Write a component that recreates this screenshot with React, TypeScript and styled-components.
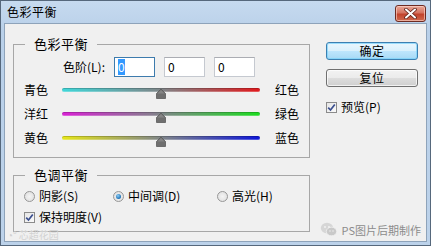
import React from "react";
import styled, { createGlobalStyle } from "styled-components";

const Global = createGlobalStyle`
  html, body { margin: 0; padding: 0; background: #ffffff; }
  body { font-family: "Noto Sans CJK SC", "Liberation Sans", sans-serif; font-size: 12px; color: #000; }
  * { box-sizing: border-box; }
`;

const Window = styled.div`
  width: 431px;
  height: 246px;
  border: 1px solid #56687c;
  background: linear-gradient(#c6daef, #b9d0e9 30px, #bcd2ea);
  display: flex;
  flex-direction: column;
`;

const TitleBar = styled.div`
  height: 22px;
  display: flex;
  align-items: center;
  justify-content: space-between;
  padding: 0 4px 0 6px;
`;

const Title = styled.span`
  font-size: 12px;
  line-height: 14px;
  color: #000;
  letter-spacing: 0.5px;
`;

const CloseBtn = styled.div`
  width: 31px;
  height: 17px;
  margin-top: 2px;
  border: 1px solid #6e2b22;
  border-radius: 3px;
  background: linear-gradient(#e9a797, #d57461 45%, #c2432c 55%, #cf6a4f);
  box-shadow: inset 0 0 0 1px rgba(255, 220, 210, 0.6);
  display: flex;
  align-items: center;
  justify-content: center;
`;

const Client = styled.div`
  flex: 1;
  margin: 0 3px 3px 3px;
  border: 1px solid #8ea3ba;
  background: #f0f0f0;
  display: flex;
  position: relative;
`;

const LeftCol = styled.div`
  width: 297px;
  margin-left: 8px;
  display: flex;
  flex-direction: column;
`;

const Group = styled.fieldset<{ $top: number; $padBottom: number }>`
  margin: ${(p) => p.$top}px 0 0 0;
  padding: 0 0 ${(p) => p.$padBottom}px 0;
  min-width: 0;
  border: 1px solid #a7a7a7;
  display: flex;
  flex-direction: column;
`;

const Legend = styled.legend`
  margin-left: 11px;
  padding: 0 9px;
  font-size: 13px;
  line-height: 16px;
  letter-spacing: 0.5px;
`;

const LevelRow = styled.div`
  display: flex;
  align-items: center;
  height: 20px;
  margin-top: 5px;
  padding-left: 49px;
  gap: 9px;
`;

const LevelLabel = styled.span`
  margin-right: 0px;
  line-height: 14px;
`;

const NumBox = styled.div<{ $focus?: boolean }>`
  width: 41px;
  height: 20px;
  border: 1px solid ${(p) => (p.$focus ? "#3d7bad" : "#c5c9d0")};
  border-top-color: ${(p) => (p.$focus ? "#3d7bad" : "#abadb3")};
  background: #fff;
  display: flex;
  align-items: center;
  padding-left: 3px;
  line-height: 14px;
`;

const Sel = styled.span`
  background: #3399ff;
  color: #fff;
  padding: 1px 0;
`;

const SliderRow = styled.div`
  display: flex;
  align-items: center;
  height: 24px;
  padding-left: 10px;
`;

const SideLabel = styled.span<{ $w: number }>`
  width: ${(p) => p.$w}px;
  line-height: 14px;
`;

const TrackWrap = styled.div`
  position: relative;
  width: 198px;
  height: 4px;
  margin-right: 15px;
`;

const Track = styled.div<{ $from: string; $to: string }>`
  width: 100%;
  height: 4px;
  border-radius: 2px;
  background: linear-gradient(to right, ${(p) => p.$from}, #7f8588 50%, ${(p) => p.$to});
  box-shadow: inset 0 1px 0 rgba(0, 0, 0, 0.18), inset 0 -1px 0 rgba(255, 255, 255, 0.25);
`;

const Thumb = styled.svg`
  position: absolute;
  left: 94px;
  top: 1px;
`;

const OptRow = styled.div`
  display: flex;
  align-items: center;
  height: 16px;
  margin-top: 5px;
  padding-left: 10px;
`;

const OptItem = styled.label<{ $w?: number }>`
  display: flex;
  align-items: center;
  gap: 4px;
  ${(p) => (p.$w ? `width: ${p.$w}px;` : "")}
  line-height: 14px;
`;

const Radio = styled.span<{ $on?: boolean }>`
  width: 11px;
  height: 11px;
  border-radius: 50%;
  border: 1px solid #979797;
  background: radial-gradient(circle at 50% 50%, #f4f4f4, #dcdcdc);
  display: flex;
  align-items: center;
  justify-content: center;
  &::after {
    content: "";
    display: ${(p) => (p.$on ? "block" : "none")};
    width: 5px;
    height: 5px;
    border-radius: 50%;
    background: radial-gradient(circle at 40% 35%, #8ccdf5, #1b6fb5 70%, #13558f);
  }
`;

const Check = styled.span`
  width: 11px;
  height: 11px;
  border: 1px solid #8b8b8b;
  background: linear-gradient(135deg, #e6e6e6, #fafafa);
  display: flex;
  align-items: center;
  justify-content: center;
`;

const RightCol = styled.div`
  margin-left: 16px;
  margin-top: 18px;
  display: flex;
  flex-direction: column;
  width: 92px;
`;

const Button = styled.div<{ $primary?: boolean }>`
  height: 18px;
  border: 1px solid ${(p) => (p.$primary ? "#3c7fb1" : "#707070")};
  border-radius: 3px;
  background: ${(p) =>
    p.$primary
      ? "linear-gradient(#eaf6fd, #d9f0fc 50%, #bee6fd 50%, #a7d9f5)"
      : "linear-gradient(#f2f2f2, #ebebeb 50%, #dddddd 50%, #cfcfcf)"};
  box-shadow: inset 0 0 0 1px ${(p) => (p.$primary ? "rgba(120,210,250,0.7)" : "rgba(255,255,255,0.7)")};
  display: flex;
  align-items: center;
  justify-content: center;
  line-height: 14px;
  letter-spacing: 0.5px;
  & + & {
    margin-top: 9px;
  }
`;

const PreviewRow = styled.div`
  display: flex;
  align-items: center;
  height: 16px;
  margin-top: 12px;
`;

const Watermark = styled.div`
  position: absolute;
  right: 5px;
  bottom: 4px;
  display: flex;
  align-items: center;
  gap: 4px;
  color: #8c8c8c;
  font-size: 11px;
  line-height: 14px;
`;

const FaintMark = styled.div`
  position: absolute;
  left: 2px;
  bottom: 0px;
  display: flex;
  align-items: center;
  gap: 2px;
  color: #d2d2d2;
  font-size: 10px;
  line-height: 12px;
`;

const CheckMark = () => (
  <svg width="9" height="9" viewBox="0 0 9 9">
    <path d="M1.2 4.6 L3.5 7 L7.8 1.4" fill="none" stroke="#3b4f8f" strokeWidth="1.7" />
  </svg>
);

const ThumbShape = () => (
  <Thumb width="10" height="10" viewBox="0 0 10 10">
    <path d="M5 0 L9.5 4.5 L9.5 9.5 L0.5 9.5 L0.5 4.5 Z" fill="#6f6f6f" stroke="#5a5a5a" strokeWidth="0.8" />
    <path d="M5 1 L8.5 4.6 L1.5 4.6 Z" fill="#858585" />
  </Thumb>
);

const sliders = [
  { l: "青色", r: "红色", from: "#3fd6d8", to: "#e0191c" },
  { l: "洋红", r: "绿色", from: "#d821d4", to: "#1bdc1f" },
  { l: "黄色", r: "蓝色", from: "#e6e619", to: "#0d16d8" },
];

const WeChatIcon = () => (
  <svg width="18" height="15" viewBox="0 0 18 15">
    <ellipse cx="7" cy="6" rx="6.2" ry="5.2" fill="#d6d6d6" />
    <ellipse cx="11.5" cy="9.5" rx="5.2" ry="4.3" fill="#c9c9c9" stroke="#f0f0f0" strokeWidth="0.8" />
    <circle cx="5" cy="5" r="0.9" fill="#f4f4f4" />
    <circle cx="9" cy="5" r="0.9" fill="#f4f4f4" />
    <circle cx="10" cy="9" r="0.7" fill="#f4f4f4" />
    <circle cx="13" cy="9" r="0.7" fill="#f4f4f4" />
  </svg>
);

export default function App() {
  return (
    <>
      <Global />
      <Window>
        <TitleBar>
          <Title>色彩平衡</Title>
          <CloseBtn>
            <svg width="13" height="11" viewBox="0 0 13 11">
              <path d="M2 1.5 L11 9.5 M11 1.5 L2 9.5" stroke="#5a1f16" strokeWidth="3.6" strokeLinecap="round" />
              <path d="M2 1.5 L11 9.5 M11 1.5 L2 9.5" stroke="#ffffff" strokeWidth="2" strokeLinecap="round" />
            </svg>
          </CloseBtn>
        </TitleBar>
        <Client>
          <LeftCol>
            <Group $top={12} $padBottom={7}>
              <Legend>色彩平衡</Legend>
              <LevelRow>
                <LevelLabel>色阶(L):</LevelLabel>
                <NumBox $focus>
                  <Sel>0</Sel>
                </NumBox>
                <NumBox>0</NumBox>
                <NumBox>0</NumBox>
              </LevelRow>
              <div style={{ height: 1 }} />
              {sliders.map((s) => (
                <SliderRow key={s.l}>
                  <SideLabel $w={38}>{s.l}</SideLabel>
                  <TrackWrap>
                    <Track $from={s.from} $to={s.to} />
                    <ThumbShape />
                  </TrackWrap>
                  <SideLabel $w={24}>{s.r}</SideLabel>
                </SliderRow>
              ))}
            </Group>
            <Group $top={9} $padBottom={6}>
              <Legend>色调平衡</Legend>
              <OptRow>
                <OptItem $w={89}>
                  <Radio />
                  阴影(S)
                </OptItem>
                <OptItem $w={104}>
                  <Radio $on />
                  中间调(D)
                </OptItem>
                <OptItem>
                  <Radio />
                  高光(H)
                </OptItem>
              </OptRow>
              <OptRow>
                <OptItem>
                  <Check>
                    <CheckMark />
                  </Check>
                  保持明度(V)
                </OptItem>
              </OptRow>
            </Group>
          </LeftCol>
          <RightCol>
            <Button $primary>确定</Button>
            <Button>复位</Button>
            <PreviewRow>
              <OptItem>
                <Check>
                  <CheckMark />
                </Check>
                预览(P)
              </OptItem>
            </PreviewRow>
          </RightCol>
          <Watermark>
            <WeChatIcon />
            PS图片后期制作
          </Watermark>
          <FaintMark>
            <span>◔°</span>
            <span>芯超花园</span>
          </FaintMark>
        </Client>
      </Window>
    </>
  );
}
